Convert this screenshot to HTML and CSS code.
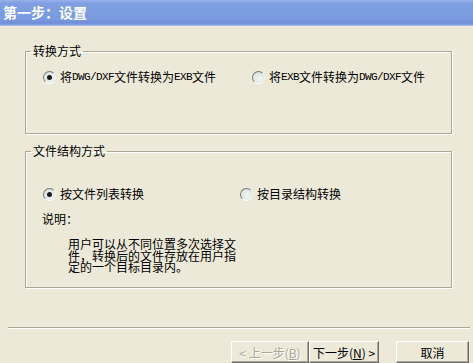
FILE: index.html
```html
<!DOCTYPE html>
<html>
<head>
	<title>第一步：设置</title>
	<link rel="stylesheet" href="styles.css">
</head>
<body>
   <div class="titlebar">第一步：设置</div>

   <fieldset class="group convert">
      <legend>转换方式</legend>
      <div class="inner">
         <div class="options">
            <label class="option"><span class="radio checked"></span>将<span class="en">DWG/DXF</span>文件转换为<span class="en">EXB</span>文件</label>
            <label class="option"><span class="radio"></span>将<span class="en">EXB</span>文件转换为<span class="en">DWG/DXF</span>文件</label>
         </div>
      </div>
   </fieldset>

   <fieldset class="group structure">
      <legend>文件结构方式</legend>
      <div class="inner">
         <div class="options">
            <label class="option"><span class="radio checked"></span>按文件列表转换</label>
            <label class="option"><span class="radio"></span>按目录结构转换</label>
         </div>
         <div class="note">说明：</div>
         <div class="desc">用户可以从不同位置多次选择文件，转换后的文件存放在用户指定的一个目标目录内。</div>
      </div>
   </fieldset>

   <div class="separator"></div>

   <div class="buttons">
      <button class="btn back" disabled>&lt; 上一步(<u>B</u>)</button>
      <button class="btn next">下一步(<u>N</u>) &gt;</button>
      <button class="btn cancel">取消</button>
   </div>
</body>
</html>
```

FILE: styles.css
```css
html, body{
	margin: 0;
	padding: 0;
}
body{
	width: 473px;
	height: 363px;
	overflow: hidden;
	background: #ece9d8;
	font-family: "Noto Sans CJK SC", "Liberation Sans", sans-serif;
	font-size: 12px;
	color: #000;
}
.titlebar{
	height: 26px;
	line-height: 25px;
	padding-left: 3px;
	box-sizing: border-box;
	color: #fff;
	font-size: 14px;
	font-weight: bold;
	background: linear-gradient(#9ab2ea 0, #7f9fe2 3px, #7b9be0 19px, #6e8ed8 23px, #8aa4e2 25px, #b8c4e0 26px);
}
.group{
	box-sizing: border-box;
	width: 427px;
	margin: 18px 0 0 25px;
	padding: 0 0 0 5px;
	border: 1px solid #aca899;
	box-shadow: inset 1px 1px 0 #fff, 1px 1px 0 #fff;
}
.group legend{
	padding: 0 2px;
	line-height: 14px;
}
.convert{
	height: 90px;
}
.structure{
	height: 144px;
	margin-top: 10px;
}
.inner{
	padding-left: 12px;
}
.convert .inner{
	padding-top: 12px;
}
.structure .inner{
	padding-top: 29px;
}
.options{
	display: grid;
	grid-template-columns: 209px auto;
}
.structure .options{
	grid-template-columns: 197px auto;
}
.option{
	display: flex;
	align-items: center;
	line-height: 14px;
	white-space: nowrap;
}
.en{
	font-family: "Liberation Mono", monospace;
	font-size: 11px;
	letter-spacing: -0.6px;
}
.radio{
	width: 11px;
	height: 11px;
	margin-right: 4px;
	border-radius: 50%;
	border: 1px solid;
	border-color: #7a7a72 #f4f4f0 #ffffff #7a7a72;
	background: radial-gradient(circle at 60% 60%, #f2f6f4 0, #d8e2de 80%);
	position: relative;
}
.radio.checked::after{
	content: "";
	position: absolute;
	left: 3px;
	top: 3px;
	width: 5px;
	height: 5px;
	border-radius: 50%;
	background: #1a1a1a;
}
.note{
	margin: 11px 0 0 -1px;
	line-height: 14px;
}
.desc{
	margin-top: 12px;
	padding-left: 25px;
	width: 170px;
	line-height: 11.5px;
}
.separator{
	margin: 39px 3px 0 8px;
	border-top: 1px solid #aca899;
	border-bottom: 1px solid #fff;
}
.buttons{
	display: flex;
	justify-content: flex-end;
	margin-top: 12px;
	padding-right: 4px;
}
.btn{
	box-sizing: border-box;
	height: 22px;
	padding: 0;
	font-family: "Noto Sans CJK SC", sans-serif;
	font-size: 12px;
	color: #000;
	background: #ece9d8;
	border: 1px solid;
	border-color: #fff #716f64 #716f64 #fff;
	box-shadow: inset -1px -1px 0 #aca899;
	border-radius: 0;
}
.back{
	width: 78px;
	color: #aca899;
	text-shadow: 1px 1px 0 #fff;
}
.next{
	width: 70px;
}
.cancel{
	width: 73px;
	margin-left: 17px;
}
```
